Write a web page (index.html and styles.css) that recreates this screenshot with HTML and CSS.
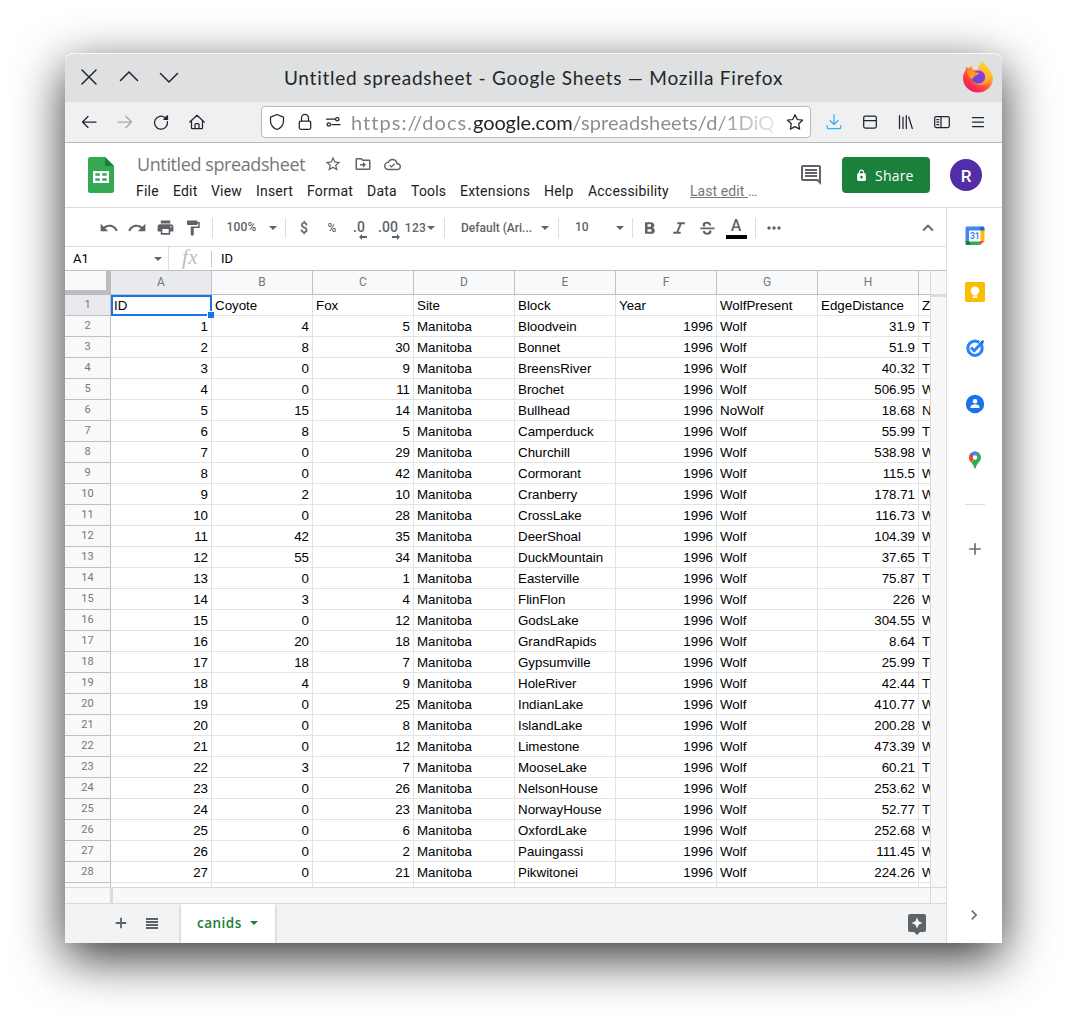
FILE: index.html
```html
<!DOCTYPE html>
<html lang="en">
<head>
<meta charset="utf-8">
<title>Untitled spreadsheet - Google Sheets</title>
<link rel="stylesheet" href="styles.css">
</head>
<body>
<div class="window">
  <div class="titlebar">
    <div class="window-buttons">
      <svg width="20" height="20" viewBox="0 0 20 20"><path d="M3 3l14 14M17 3L3 17"/></svg>
      <svg width="20" height="20" viewBox="0 0 20 20"><path d="M1.500 13.500L10 5l8.500 8.500"/></svg>
      <svg width="20" height="20" viewBox="0 0 20 20"><path d="M1.500 6.500L10 15l8.500-8.500"/></svg>
    </div>
    <div class="window-title"><span>Untitled spreadsheet - Google Sheets — Mozilla Firefox</span></div>
    <svg class="firefox" width="32" height="32" viewBox="0 0 32 32">
      <defs>
        <linearGradient id="fire" x1=".85" y1=".1" x2=".25" y2=".95"><stop offset="0" stop-color="#fff14a"/><stop offset=".35" stop-color="#ffa52a"/><stop offset=".62" stop-color="#ff5530"/><stop offset="1" stop-color="#f5126e"/></linearGradient>
        <linearGradient id="globe" x1=".8" y1="0" x2=".3" y2="1"><stop offset="0" stop-color="#9a3be0"/><stop offset="1" stop-color="#5a4be0"/></linearGradient>
        <linearGradient id="mane" x1="0" y1="0" x2="1" y2="1"><stop offset="0" stop-color="#ff8a2e"/><stop offset="1" stop-color="#ffa828"/></linearGradient>
      </defs>
      <path d="M20.500 0c1 3 4.500 4.500 6 7.500.8.500 1 1.500 1 1.500 2.500 2.500 3.500 5.500 3.500 8A15 14.600 0 1 1 1 17c0-3.500 1-5.500 2.500-7.500C3.500 8 4 7 5.200 5.500c.2 1 .7 1.600 1.200 2C7 6.500 8.500 5.500 10.500 5c-.4 1-.5 2.500 0 3.500l5 .5c1-3 2-6 5-9z" fill="url(#fire)"/>
      <path d="M20.500 0c1 3 4.500 4.500 6 7.500 3 5 3 13-4 16-5 2-10 0-12-3 5 2 11 1 12.500-4C24 12 18 9 15.500 9c1-3 2-6 5-9z" fill="#ffc233" opacity=".55"/>
      <circle cx="16.500" cy="16" r="6.600" fill="url(#globe)"/>
      <path d="M5 10.500c2-2.500 5-1.500 6.500.5l5 .7c1 1-.5 2-3.500 2.800-1 1.300-1.500 2-3.200 3.500-2.500-1-4.300-4.500-4.800-7.500z" fill="url(#mane)"/>
    </svg>
  </div>

  <div class="navbar">
    <div class="nav-buttons">
      <svg width="18" height="18" viewBox="0 0 18 18"><path d="M16 9H2.500M8 3.500L2.500 9 8 14.500"/></svg>
      <svg class="disabled" width="18" height="18" viewBox="0 0 18 18"><path d="M2 9h13.500M10 3.500L15.500 9 10 14.500"/></svg>
      <svg width="18" height="18" viewBox="0 0 18 18"><path d="M15.400 8.500A6.500 6.500 0 1 1 13.300 4.800"/><path class="solid" d="M12 6.300h3.500V2.800z"/></svg>
      <svg width="18" height="18" viewBox="0 0 18 18"><path d="M1.800 9L9 2.200 16.200 9M3.500 7.500V15q0 .7.700.7h9.600q.7 0 .7-.7V7.500M7 15.500v-4q0-1 1-1h2q1 0 1 1v4"/></svg>
    </div>
    <div class="urlbar">
      <svg width="18" height="18" viewBox="0 0 18 18"><path d="M9 1.500l6.500 2.700v4c0 4-3.200 7.300-6.500 8.300-3.300-1-6.500-4.300-6.500-8.300v-4z"/></svg>
      <svg width="18" height="18" viewBox="0 0 18 18"><rect x="3.300" y="8" width="11.400" height="8.300" rx="1.500"/><path d="M5.500 8V4.800a3.500 3.500 0 0 1 7 0V8"/></svg>
      <svg width="18" height="18" viewBox="0 0 18 18"><path d="M2.500 6.200h8.500M8 11.500h8"/><circle cx="13.300" cy="6.200" r="1.700"/><circle cx="4.800" cy="11.500" r="1.700"/></svg>
      <div class="url"><span class="url-host">https://docs.</span><b>google.com</b><span>/spreadsheets/d/1DiQ</span></div>
      <svg width="18" height="18" viewBox="0 0 18 18"><path d="M9 1.700l2.300 4.800 5.200.7-3.800 3.600.9 5.300L9 13.600l-4.600 2.500.9-5.300L1.500 7.200l5.200-.7z"/></svg>
    </div>
    <div class="nav-buttons">
      <svg class="download" width="18" height="18" viewBox="0 0 18 18"><path d="M9 1.500V11M5 7.500L9 11.500l4-4M2.200 12.500v2q0 1 1 1h11.600q1 0 1-1v-2"/></svg>
      <svg width="18" height="18" viewBox="0 0 18 18"><rect x="2.700" y="3" width="12.600" height="12" rx="1.500"/><path d="M2.700 7.500h12.600"/></svg>
      <svg width="18" height="18" viewBox="0 0 18 18"><path d="M2.500 2.500v13M6 4v11.500M9.300 2.500v13M11.700 4l3.600 11.500"/></svg>
      <svg width="18" height="18" viewBox="0 0 18 18"><rect x="1.700" y="3.500" width="14.600" height="11" rx="1.500"/><path d="M8 3.500v11M3.800 6.500h2M3.800 9h2M3.800 11.500h2"/></svg>
      <svg width="18" height="18" viewBox="0 0 18 18"><path d="M3.500 4.500h11M3.500 9h11M3.500 13.500h11"/></svg>
    </div>
  </div>

  <header class="doc-header">
    <svg class="sheets-logo" width="26" height="36" viewBox="0 0 26 36"><path d="M2.500 0H17l9 9v24.500a2.500 2.500 0 0 1-2.500 2.500h-21A2.500 2.500 0 0 1 0 33.500v-31A2.500 2.500 0 0 1 2.500 0z" fill="#34a853"/><path d="M17 0l9 9h-9z" fill="#188038"/><path d="M5 14h16v12H5zm2.300 2.300v2.500h4.500v-2.500zm6.900 0v2.500h4.500v-2.500zm-6.900 4.900v2.500h4.500v-2.500zm6.900 0v2.500h4.500v-2.500z" fill="#fff" fill-rule="evenodd"/></svg>
    <div class="doc-info">
      <div class="doc-title-row">
        <span class="doc-title">Untitled spreadsheet</span>
        <svg width="18" height="18" viewBox="0 0 24 24"><path d="M22 9.240l-7.190-.62L12 2 9.190 8.630 2 9.240l5.460 4.730L5.820 21 12 17.270 18.180 21l-1.630-7.030L22 9.240zM12 15.400l-3.760 2.270 1-4.280-3.320-2.880 4.380-.38L12 6.100l1.710 4.040 4.380.38-3.320 2.880 1 4.280L12 15.400z"/></svg>
        <svg width="18" height="18" viewBox="0 0 24 24"><path d="M20 6h-8l-2-2H4c-1.100 0-2 .9-2 2v12c0 1.100.9 2 2 2h16c1.100 0 2-.9 2-2V8c0-1.100-.9-2-2-2zm0 12H4V6h5.200l2 2H20v10zm-8-1l4-4-4-4v3H8v2h4z"/></svg>
        <svg width="17" height="17" viewBox="0 0 24 24"><path d="M19.350 10.040C18.670 6.590 15.640 4 12 4 9.110 4 6.600 5.640 5.350 8.040 2.340 8.360 0 10.910 0 14c0 3.310 2.690 6 6 6h13c2.760 0 5-2.240 5-5 0-2.640-2.050-4.780-4.650-4.960zM19 18H6c-2.210 0-4-1.790-4-4s1.790-4 4-4h.71C7.370 7.690 9.480 6 12 6c3.040 0 5.500 2.460 5.500 5.500v.5H19c1.660 0 3 1.340 3 3s-1.340 3-3 3zm-8.500-3.800l-1.800-1.800-1.200 1.200 3 3 5-5-1.200-1.200z"/></svg>
      </div>
      <nav class="menu"><span>File</span><span>Edit</span><span>View</span><span>Insert</span><span>Format</span><span>Data</span><span>Tools</span><span>Extensions</span><span>Help</span><span>Accessibility</span><span class="last-edit"><u>Last edit </u>…</span></nav>
    </div>
    <svg class="comments" width="24" height="24" viewBox="0 0 24 24"><path d="M21.990 4c0-1.100-.89-2-1.990-2H4c-1.100 0-2 .9-2 2v12c0 1.100.9 2 2 2h14l4 4-.010-18zM20 4v13.170L18.830 16H4V4h16zM6 12h12v2H6zm0-3h12v2H6zm0-3h12v2H6z"/></svg>
    <button class="share"><svg width="13" height="13" viewBox="0 0 24 24"><path d="M18 8h-1V6c0-2.760-2.240-5-5-5S7 3.240 7 6v2H6c-1.100 0-2 .9-2 2v10c0 1.100.9 2 2 2h12c1.100 0 2-.9 2-2V10c0-1.100-.9-2-2-2zm-6 9.500a2.500 2.500 0 1 1 0-5 2.500 2.500 0 0 1 0 5zM15 8H9V6a3 3 0 0 1 6 0z"/></svg><span>Share</span></button>
    <div class="avatar">R</div>
  </header>

  <div class="workspace">
    <main class="editor">
      <div class="toolbar">
        <svg width="20" height="20" viewBox="0 0 24 24"><path d="M12.500 8c-2.650 0-5.050.99-6.900 2.600L2 7v9h9l-3.620-3.620c1.390-1.160 3.160-1.880 5.120-1.880 3.540 0 6.550 2.310 7.600 5.500l2.370-.78C21.080 11.030 17.150 8 12.500 8z"/></svg>
        <svg width="20" height="20" viewBox="0 0 24 24"><path d="M18.400 10.600C16.550 8.990 14.150 8 11.500 8c-4.650 0-8.580 3.030-9.960 7.220L3.900 16c1.050-3.190 4.050-5.500 7.600-5.500 1.950 0 3.730.72 5.120 1.880L13 16h9V7l-3.600 3.600z"/></svg>
        <svg width="19" height="19" viewBox="0 0 24 24"><path d="M19 8H5c-1.660 0-3 1.340-3 3v6h4v4h12v-4h4v-6c0-1.660-1.340-3-3-3zm-3 11H8v-5h8v5zm3-7c-.55 0-1-.45-1-1s.45-1 1-1 1 .45 1 1-.45 1-1 1zm-1-9H6v4h12V3z"/></svg>
        <svg width="18" height="18" viewBox="0 0 24 24"><path d="M18 4V3c0-.55-.45-1-1-1H5c-.55 0-1 .45-1 1v4c0 .55.45 1 1 1h12c.55 0 1-.45 1-1V6h1v4H9v11c0 .55.45 1 1 1h2c.55 0 1-.45 1-1v-9h8V4h-3z"/></svg>
        <i class="sep"></i>
        <span class="zoom">100%</span><i class="caret"></i>
        <i class="sep"></i>
        <span class="symbol">$</span>
        <span>%</span>
        <span class="decimals">.0<svg width="8" height="6" viewBox="0 0 8 6"><path d="M0 3l3-3v2h5v2H3v2z"/></svg></span>
        <span class="decimals">.00<svg width="8" height="6" viewBox="0 0 8 6"><path d="M8 3L5 0v2H0v2h5v2z"/></svg></span>
        <span class="formats">123<i class="caret"></i></span>
        <i class="sep"></i>
        <span class="font-name">Default (Ari...</span><i class="caret"></i>
        <i class="sep"></i>
        <span class="font-size">10</span><i class="caret"></i>
        <i class="sep"></i>
        <svg width="20" height="20" viewBox="0 0 24 24"><path d="M15.600 11.790c.97-.67 1.650-1.770 1.650-2.790 0-2.260-1.750-4-4-4H6v14h8.040c2.090 0 3.710-1.700 3.710-3.790 0-1.520-.86-2.820-2.150-3.420zM9 7.500h3c.83 0 1.500.67 1.500 1.500s-.67 1.500-1.500 1.500H9v-3zm3.500 9H9v-3h3.500c.83 0 1.500.67 1.500 1.500s-.67 1.500-1.500 1.500z"/></svg>
        <svg width="20" height="20" viewBox="0 0 24 24"><path d="M10 5v2.500h2.700l-3.900 9H5V19h9v-2.500h-2.700l3.900-9H19V5z"/></svg>
        <svg width="20" height="20" viewBox="0 0 24 24"><path d="M4 11.500h17v2H4zM17 9h-2.600c0-1.300-1-2-2.500-2s-2.400.6-2.400 1.600c0 .8.500 1.200 1.300 1.500H7.400A3.600 3.600 0 0 1 6.800 8.500C6.800 6 9 4.600 11.900 4.600c3.200 0 5.100 1.800 5.100 4.400zM7 15.500h2.600c.1 1.500 1.200 2.100 2.600 2.100s2.400-.6 2.400-1.600c0-.4-.1-.7-.4-1h2.900c.2.400.3.900.3 1.400 0 2.300-2.200 3.700-5.200 3.700-3 0-5.200-1.600-5.200-4.600z"/></svg>
        <span class="text-color">A</span>
        <i class="sep"></i>
        <svg width="20" height="20" viewBox="0 0 24 24"><path d="M6 10c-1.100 0-2 .9-2 2s.9 2 2 2 2-.9 2-2-.9-2-2-2zm12 0c-1.100 0-2 .9-2 2s.9 2 2 2 2-.9 2-2-.9-2-2-2zm-6 0c-1.100 0-2 .9-2 2s.9 2 2 2 2-.9 2-2-.9-2-2-2z"/></svg>
        <i></i>
        <svg width="22" height="22" viewBox="0 0 24 24"><path d="M12 8l-6 6 1.410 1.410L12 10.830l4.590 4.580L18 14z"/></svg>
      </div>
      <div class="formula-bar"><span class="cell-name">A1</span><i class="caret"></i><span class="fx">fx</span><span class="formula">ID</span></div>
      <div class="grid-area">
        <div class="grid-clip">
          <table class="grid">
            <thead><tr><th class="corner"></th><th class="active">A</th><th>B</th><th>C</th><th>D</th><th>E</th><th>F</th><th>G</th><th>H</th><th></th></tr></thead>
            <tbody id="rows"></tbody>
          </table>
        </div>
        <div class="v-scroll"></div>
      </div>
      <div class="h-scroll"><i></i><i></i><i></i></div>
      <footer class="sheet-tabs">
        <svg width="18" height="18" viewBox="0 0 24 24"><path d="M19 13.200h-5.800V19h-2.400v-5.800H5v-2.400h5.800V5h2.400v5.800H19z"/></svg>
        <svg width="18" height="18" viewBox="0 0 18 18"><path d="M3 4h12v2H3zM3 7h12v2H3zM3 10h12v2H3zM3 13h12v2H3z"/></svg>
        <div class="tab"><span>canids</span><i class="caret"></i></div>
        <svg class="explore" width="18" height="22" viewBox="0 0 18 22"><path d="M2 0h14a2 2 0 0 1 2 2v14a2 2 0 0 1-2 2h-4l-3 3-3-3H2a2 2 0 0 1-2-2V2a2 2 0 0 1 2-2zm7 3.500L7.300 7.300 3.500 9l3.800 1.700L9 14.500l1.700-3.800L14.500 9l-3.800-1.700z"/></svg>
      </footer>
    </main>
    <aside class="side-panel">
      <svg width="20" height="20" viewBox="0 0 20 20"><path d="M2 .5h13v5H5v10H.5V2A1.500 1.500 0 0 1 2 .5z" fill="#4285f4"/><path d="M15 .5h3A1.500 1.500 0 0 1 19.500 2v3H15z" fill="#1967d2"/><path d="M15 4.500h4.500V15H15z" fill="#fbbc04"/><path d="M5 15h10v4H5z" fill="#34a853"/><path d="M.5 15H5v4H2a1.500 1.500 0 0 1-1.500-1.500z" fill="#188038"/><path d="M15 15h4.500L15 19z" fill="#ea4335"/><path d="M4 4.500h11.500V15.500H4z" fill="#fff"/><text x="9.800" y="13.200" text-anchor="middle" class="cal-day">31</text></svg>
      <svg width="20" height="20" viewBox="0 0 20 20"><rect width="20" height="20" rx="1.500" fill="#fbbc04"/><path d="M10 4.500a4.300 4.300 0 0 0-2.300 7.900V13.500h4.600v-1.100A4.300 4.300 0 0 0 10 4.500zM7.700 14.300h4.600V16H7.700z" fill="#fff"/></svg>
      <svg width="20" height="20" viewBox="0 0 20 20"><circle cx="10" cy="10.200" r="7.200" fill="none" stroke="#2684fc" stroke-width="3"/><path d="M6 9.500l3.200 3.200L17.800 4" fill="none" stroke="#2684fc" stroke-width="3"/><path d="M13.800 5.200l2.500-2.500" stroke="#fff" stroke-width="1"/><path d="M15.500 4.200l2.500-2.200 1 1-1.700 2.800z" fill="#0066da"/></svg>
      <svg width="20" height="20" viewBox="0 0 20 20"><circle cx="10" cy="10" r="9.200" fill="#1a73e8"/><circle cx="10" cy="7.200" r="2.300" fill="#fff"/><path d="M5.500 14v-1c0-1.700 2.500-2.700 4.500-2.700s4.500 1 4.500 2.700v1z" fill="#fff"/></svg>
      <svg width="20" height="20" viewBox="0 0 20 20"><clipPath id="pin"><path d="M10 1.500a6 6 0 0 0-6 6c0 4 4.500 6 5.300 10.500.2.700 1.200.7 1.400 0C11.500 13.500 16 11.500 16 7.500a6 6 0 0 0-6-6z"/></clipPath><g clip-path="url(#pin)"><path d="M0 0h20v20H0z" fill="#34a853"/><path d="M15 2L5 14.500l-5-3L5 5z" fill="#fbbc04"/><path d="M10 7.500L5.500 3 0 4v6l6 2z" fill="#ea4335"/><path d="M10 7.500L5 3.300 8 0h10l-3 2.500z" fill="#4285f4"/></g><circle cx="10" cy="7.500" r="2.200" fill="#fff"/></svg>
      <hr>
      <svg class="gray" width="20" height="20" viewBox="0 0 24 24"><path d="M19 13h-6v6h-2v-6H5v-2h6V5h2v6h6z"/></svg>
      <svg class="gray collapse" width="20" height="20" viewBox="0 0 24 24"><path d="M10 6L8.590 7.410 13.170 12l-4.580 4.590L10 18l6-6z"/></svg>
    </aside>
  </div>
</div>
<script src="rows.js"></script>
</body>
</html>
```
FILE: styles.css
```css
* { box-sizing: border-box; }
body { margin: 0; padding: 53px 65px 0; width: 1067px; height: 1020px; overflow: hidden; background: #fff; font-family: Roboto, sans-serif; }
svg { display: block; flex: none; }
i { font-style: normal; }

.window { width: 937px; height: 890px; display: flex; flex-direction: column; background: #fff; border-radius: 8px 8px 0 0; box-shadow: 0 15px 50px rgba(0, 0, 0, .8); }

.titlebar { height: 49px; display: grid; grid-template-columns: 160px 1fr 160px; align-items: center; padding: 0 8px 2px 4px; background: #dee0e2; border-top: 1px solid #f6f7f7; border-radius: 8px 8px 0 0; }
.window-buttons { display: flex; padding-left: 10px; gap: 20px; }
.titlebar path { stroke-linecap: round; }
.window-buttons path { fill: none; stroke: #232629; stroke-width: 1.5; }
.window-title { display: flex; justify-content: center; font: 19px Lato, sans-serif; letter-spacing: .77px; color: #232629; white-space: nowrap; padding-left: 4px; }
.firefox { justify-self: end; }

.navbar { height: 41px; display: flex; align-items: center; padding: 0 6px; background: #eff0f2; border-bottom: 1px solid #b8babd; }
.nav-buttons { display: flex; gap: 18px; padding: 0 9px; }
.navbar svg { fill: none; stroke: #232629; stroke-width: 1.25; stroke-linejoin: round; stroke-linecap: round; }
.navbar .solid { fill: #232629; }
.navbar .disabled { stroke: #a5a7a9; }
.navbar .download { stroke: #3daee9; }
.urlbar { width: 550px; height: 32px; margin: 0 5px 0 46px; padding: 0 6px; display: flex; align-items: center; gap: 10px; background: #fff; border: 1px solid #b8babd; border-radius: 4px; }
.url { flex: 1; margin: 0 -1px; font: 20px/28px Lato, sans-serif; letter-spacing: .15px; color: #8c8e90; white-space: nowrap; -webkit-mask-image: linear-gradient(90deg, #000 86%, rgba(0, 0, 0, .15)); mask-image: linear-gradient(90deg, #000 86%, rgba(0, 0, 0, .15)); }
.url-host { letter-spacing: 1.05px; }
.url b { font-weight: 400; color: #232629; letter-spacing: -.1px; }

.doc-header { height: 65px; flex: none; display: flex; padding-left: 23px; border-bottom: 1px solid #dadce0; fill: #5f6368; }
.sheets-logo { margin-top: 14px; }
.doc-info { width: 663px; padding: 9px 0 0 22px; }
.doc-title-row { display: flex; align-items: center; height: 24px; padding-left: 1px; }
.doc-title { width: 187px; font: 18px/24px "Open Sans", sans-serif; letter-spacing: -.4px; color: #777; white-space: nowrap; }
.doc-title-row svg { margin-right: 12px; }
.menu { display: grid; grid-template-columns: 37px 38px 45px 51px 60px 44px 49px 84px 44px 102px auto; padding-top: 5px; font-size: 14px; line-height: 20px; letter-spacing: .2px; color: #202124; white-space: nowrap; }
.last-edit { color: #777; letter-spacing: .08px; }
.comments { margin: 20px 19px 0 22px; }
.share { width: 88px; height: 36px; margin-top: 14px; display: flex; align-items: center; gap: 7px; padding: 0 0 0 13px; border: 0; border-radius: 4px; background: #1b8039; color: #fff; fill: #fff; font: 500 14px "Open Sans", sans-serif; letter-spacing: .2px; }
.avatar { width: 32px; height: 32px; margin: 16px 0 0 20px; border-radius: 50%; background: #512da8; color: #fff; font: 500 17px/34px Roboto, sans-serif; text-align: center; }

.workspace { flex: 1; display: flex; min-height: 0; }
.editor { width: 881px; display: flex; flex-direction: column; }
.caret { display: block; width: 8px; height: 4px; border: 4px solid transparent; border-top-color: #5f6368; border-bottom: 0; }

.toolbar { height: 39px; flex: none; display: grid; grid-template-columns: 28px 28px 28px 28px 10px 46px 20px 5px 32px 24px 30px 28px 36px 12px 85px 20px 6px 51px 16px 8px 28px 29px 28px 30px 8px 30px 1fr 36px; align-items: center; justify-items: center; padding: 1px 0 0 30px; border-bottom: 1px solid #dadce0; fill: #5f6368; color: #5f6368; font-size: 12px; font-weight: 500; white-space: nowrap; }
.toolbar .sep { width: 1px; height: 20px; background: #dadce0; }
.toolbar > .zoom { padding: 0 0 1px 3px; letter-spacing: .15px; }
.symbol { font-size: 14px; }
.decimals { font-size: 14px; display: flex; flex-direction: column; height: 18px; line-height: 16px; }
.decimals svg { align-self: flex-end; margin: -1px -2px 0 0; }
.formats { display: flex; align-items: center; gap: 1px; letter-spacing: .4px; }
.toolbar .font-name { justify-self: start; padding-left: 11px; }
.toolbar .font-size { justify-self: start; padding: 0 0 1px 14px; }
.text-color { width: 21px; height: 22px; border-bottom: 4px solid #000; font-size: 16px; line-height: 18px; text-align: center; }

.formula-bar { height: 24px; flex: none; display: flex; align-items: center; border-bottom: 1px solid #c0c0c0; font-size: 13px; color: #000; }
.cell-name { width: 81px; padding-left: 8px; }
.formula-bar .caret { margin-left: 8px; }
.fx { width: 43px; height: 23px; margin-left: 6px; padding-left: 13px; border-left: 1px solid #dadce0; font: italic 21px/20px "Liberation Serif", serif; letter-spacing: .5px; color: #bdbdbd; }
.formula { height: 16px; line-height: 16px; padding-left: 9px; border-left: 1px solid #c6c6c6; }

.grid-area { height: 616px; flex: none; display: flex; }
.grid-clip { width: 865px; overflow: hidden; }
.grid { width: 955px; table-layout: fixed; border-collapse: separate; border-spacing: 0; }
.grid th, .grid td { padding: 0; overflow: hidden; white-space: nowrap; font-weight: 400; }
.grid th { width: 101px; background: #f8f9fa; color: #777; border: solid #c0c0c0; border-width: 0 1px 1px 0; }
.grid thead th { height: 24px; padding-bottom: 1px; font-size: 12px; }
.grid th:first-child { width: 46px; }
.grid .corner { border: 4px solid #bdbdbd; border-width: 0 5px 5px 0; }
.grid .active { background: #e8eaed; }
.grid tbody th { height: 21px; font-size: 11px; line-height: 19px; vertical-align: top; }
.grid td { height: 21px; padding: 2px 3px 0; border: solid #e2e3e3; border-width: 0 1px 1px 0; font: 13.333px/18px "Liberation Sans", Arial, sans-serif; color: #000; }
.grid td.num { text-align: right; }
.grid td.selected { position: relative; overflow: visible; outline: 2px solid #1a73e8; outline-offset: -2px; }
.grid td.selected::after { content: ""; position: absolute; right: -3px; bottom: -3px; width: 6px; height: 6px; background: #1a73e8; border: solid #fff; border-width: 1px 0 0 1px; }
.v-scroll { width: 16px; background: #f8f8f8; border-left: 1px solid #d9d9d9; }
.v-scroll::before { content: ""; display: block; height: 23px; border-bottom: 3px solid #dadce0; }
.h-scroll { height: 17px; flex: none; display: grid; grid-template-columns: 48px 817px 1fr; background: #f8f8f8; border: solid #d9d9d9; border-width: 1px 0; }
.h-scroll i:first-child { border-right: 3px solid #dadce0; }
.h-scroll i:last-child { border-left: 1px solid #d9d9d9; }

.sheet-tabs { flex: 1; display: flex; align-items: center; padding: 0 20px 0 47px; background: #f1f3f4; fill: #5f6368; }
.sheet-tabs svg { margin: 0 13px 2px 0; }
.tab { width: 94px; height: 100%; margin-left: 7px; display: flex; align-items: center; gap: 8px; padding: 0 0 2px 16px; background: #fff; box-shadow: 0 1px 3px rgba(60, 64, 67, .35); clip-path: inset(0 -4px); color: #188038; font: 600 13.5px "Open Sans", sans-serif; letter-spacing: .5px; }
.tab .caret { border-top-color: #188038; }
.sheet-tabs .explore { margin: 2px 0 0 auto; }

.side-panel { width: 56px; display: flex; flex-direction: column; align-items: center; gap: 36px; padding: 18px 0; border-left: 1px solid #dadce0; }
.side-panel hr { width: 20px; margin: -2px 0; border: 0; border-top: 1px solid #dadce0; }
.side-panel .gray { fill: #6b6e72; }
.side-panel .collapse { margin: auto 2px 0 0; }
.cal-day { font: 700 8.5px Roboto, sans-serif; fill: #4285f4; }
```
FILE: rows.js
```js
// Coyote, Fox, Block, WolfPresent, EdgeDistance, first letter of the clipped column
const sites = [
  [4, 5, "Bloodvein", "Wolf", 31.9, "T"],
  [8, 30, "Bonnet", "Wolf", 51.9, "T"],
  [0, 9, "BreensRiver", "Wolf", 40.32, "T"],
  [0, 11, "Brochet", "Wolf", 506.95, "W"],
  [15, 14, "Bullhead", "NoWolf", 18.68, "N"],
  [8, 5, "Camperduck", "Wolf", 55.99, "T"],
  [0, 29, "Churchill", "Wolf", 538.98, "W"],
  [0, 42, "Cormorant", "Wolf", 115.5, "W"],
  [2, 10, "Cranberry", "Wolf", 178.71, "W"],
  [0, 28, "CrossLake", "Wolf", 116.73, "W"],
  [42, 35, "DeerShoal", "Wolf", 104.39, "W"],
  [55, 34, "DuckMountain", "Wolf", 37.65, "T"],
  [0, 1, "Easterville", "Wolf", 75.87, "T"],
  [3, 4, "FlinFlon", "Wolf", 226, "W"],
  [0, 12, "GodsLake", "Wolf", 304.55, "W"],
  [20, 18, "GrandRapids", "Wolf", 8.64, "T"],
  [18, 7, "Gypsumville", "Wolf", 25.99, "T"],
  [4, 9, "HoleRiver", "Wolf", 42.44, "T"],
  [0, 25, "IndianLake", "Wolf", 410.77, "W"],
  [0, 8, "IslandLake", "Wolf", 200.28, "W"],
  [0, 12, "Limestone", "Wolf", 473.39, "W"],
  [3, 7, "MooseLake", "Wolf", 60.21, "T"],
  [0, 26, "NelsonHouse", "Wolf", 253.62, "W"],
  [0, 23, "NorwayHouse", "Wolf", 52.77, "T"],
  [0, 6, "OxfordLake", "Wolf", 252.68, "W"],
  [0, 2, "Pauingassi", "Wolf", 111.45, "W"],
  [0, 21, "Pikwitonei", "Wolf", 224.26, "W"]
];
const table = [
  ["ID", "Coyote", "Fox", "Site", "Block", "Year", "WolfPresent", "EdgeDistance", "Z"],
  ...sites.map(([coyote, fox, block, wolf, edge, last], i) =>
    [i + 1, coyote, fox, "Manitoba", block, 1996, wolf, edge, last]),
  Array(9).fill("")
];
const body = document.getElementById("rows");
table.forEach((values, r) => {
  const row = body.insertRow();
  const head = document.createElement("th");
  head.textContent = r < 28 ? r + 1 : "";
  if (r === 0) head.className = "active";
  row.append(head);
  values.forEach((value, c) => {
    const cell = row.insertCell();
    cell.textContent = value;
    if (typeof value === "number") cell.className = "num";
    if (r === 0 && c === 0) cell.className = "selected";
  });
});
```
